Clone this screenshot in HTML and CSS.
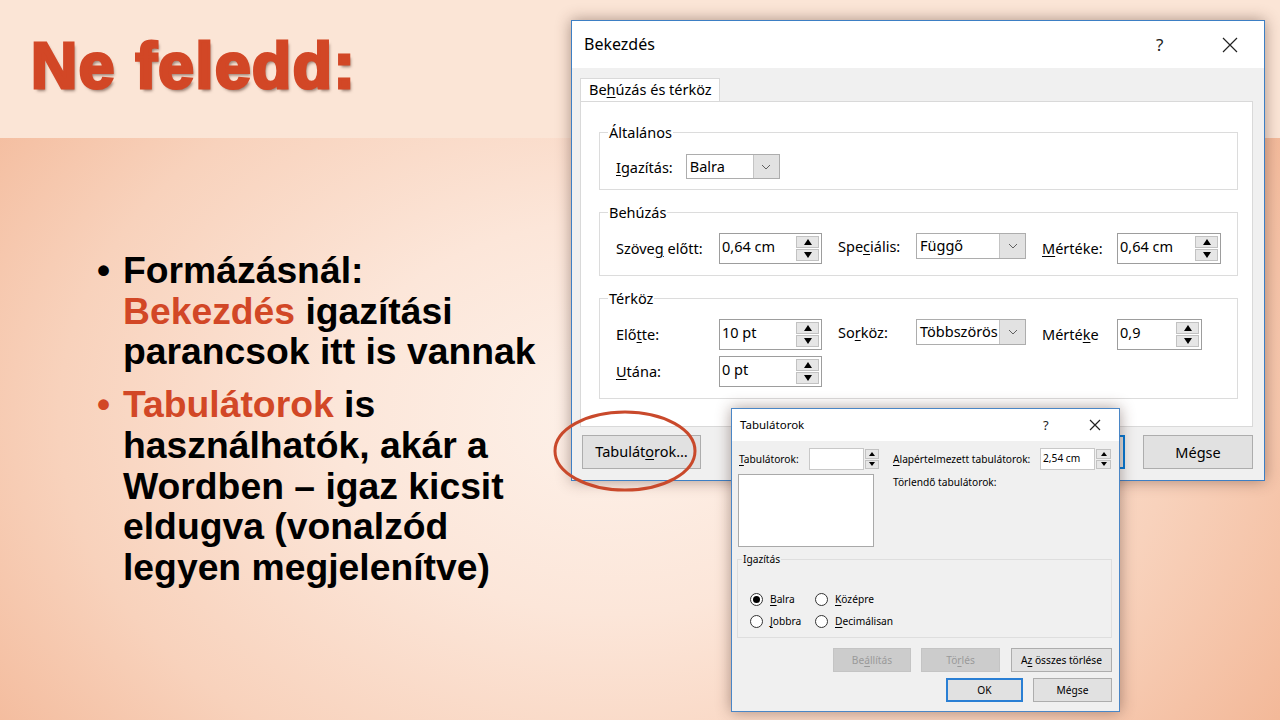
FILE: index.html
```html
<!DOCTYPE html>
<html lang="hu">
<head>
<meta charset="utf-8">
<title>Ne feledd</title>
<link rel="stylesheet" href="styles.css">
</head>
<body>
<div class="slide">
  <header class="title-band"><h1 class="title">Ne feledd:</h1></header>
  <main class="content">
    <ul class="bullets">
      <li><span class="dot">•</span><span class="txt">Formázásnál:<br><em class="hl">Bekezdés</em> igazítási<br>parancsok itt is vannak</span></li>
      <li><span class="dot hl">•</span><span class="txt"><em class="hl">Tabulátorok</em> is<br>használhatók, akár a<br>Wordben – igaz kicsit<br>eldugva (vonalzód<br>legyen megjelenítve)</span></li>
    </ul>
  </main>

  <div class="win win-para">
    <div class="titlebar">
      <span class="wtitle">Bekezdés</span>
      <span class="tb-help">?</span>
      <svg class="tb-close" width="16" height="16" viewBox="0 0 16 16"><path d="M1 1L15 15M15 1L1 15"/></svg>
    </div>
    <div class="wbody">
      <div class="tabs"><span class="tab">Be<u>h</u>úzás és térköz</span></div>
      <div class="panel">
        <fieldset class="grp g1">
          <legend>Általános</legend>
          <div class="row-simple">
            <span class="lbl"><u>I</u>gazítás:</span>
            <div class="combo c-balra"><span class="cv">Balra</span><span class="dd"><svg width="10" height="6" viewBox="0 0 10 6"><polyline points="1,1 5,5 9,1"/></svg></span></div>
          </div>
        </fieldset>
        <fieldset class="grp g2">
          <legend>Behúzás</legend>
          <div class="fgrid">
            <span class="lbl la">Szöve<u>g</u> előtt:</span>
            <div class="spin w103"><span class="sv">0,64 cm</span><span class="sb"><i class="up"></i><i class="dn"></i></span></div>
            <span class="lbl lb">Spe<u>c</u>iális:</span>
            <div class="combo w110"><span class="cv">Függő</span><span class="dd"><svg width="10" height="6" viewBox="0 0 10 6"><polyline points="1,1 5,5 9,1"/></svg></span></div>
            <span class="lbl la"><u>M</u>értéke:</span>
            <div class="spin w104"><span class="sv">0,64 cm</span><span class="sb"><i class="up"></i><i class="dn"></i></span></div>
          </div>
        </fieldset>
        <fieldset class="grp g3">
          <legend>Térköz</legend>
          <div class="fgrid">
            <span class="lbl la">Elő<u>t</u>te:</span>
            <div class="spin w103"><span class="sv">10 pt</span><span class="sb"><i class="up"></i><i class="dn"></i></span></div>
            <span class="lbl lb">So<u>r</u>köz:</span>
            <div class="combo w110"><span class="cv">Többszörös</span><span class="dd"><svg width="10" height="6" viewBox="0 0 10 6"><polyline points="1,1 5,5 9,1"/></svg></span></div>
            <span class="lbl la">Mérté<u>k</u>e</span>
            <div class="spin w85"><span class="sv">0,9</span><span class="sb"><i class="up"></i><i class="dn"></i></span></div>
            <span class="lbl la"><u>U</u>tána:</span>
            <div class="spin w103"><span class="sv">0 pt</span><span class="sb"><i class="up"></i><i class="dn"></i></span></div>
          </div>
        </fieldset>
      </div>
      <div class="btnrow">
        <button class="btn btn-tabs">Tabulát<u>o</u>rok…</button>
        <div class="btngrp">
          <button class="btn btn-ok" aria-label="OK"></button>
          <button class="btn btn-cancel">Mégse</button>
        </div>
      </div>
    </div>
  </div>

  <svg class="mark" width="160" height="96" viewBox="0 0 160 96"><ellipse cx="80" cy="48" rx="70" ry="39"/></svg>

  <div class="win win-tabs">
    <div class="titlebar sm">
      <span class="wtitle">Tabulátorok</span>
      <span class="tb-help">?</span>
      <svg class="tb-close" width="12" height="12" viewBox="0 0 12 12"><path d="M1 1L11 11M11 1L1 11"/></svg>
    </div>
    <div class="sbody">
      <div class="topgrid">
        <div class="colL">
          <div class="irow">
            <span class="slbl l-tab"><u>T</u>abulátorok:</span>
            <div class="sinput w55"></div>
            <span class="ssb"><i class="up"></i><i class="dn"></i></span>
          </div>
          <div class="listbox"></div>
        </div>
        <div class="colR">
          <div class="irow">
            <span class="slbl l-def"><u>A</u>lapértelmezett tabulátorok:</span>
            <div class="sinput w55">2,54 cm</div>
            <span class="ssb w17"><i class="up"></i><i class="dn"></i></span>
          </div>
          <div class="slbl l-del">Törlendő tabulátorok:</div>
        </div>
      </div>
      <fieldset class="sgrp">
        <legend>Igazítás</legend>
        <div class="radios">
          <span class="radio on"><i></i><span class="rl"><u>B</u>alra</span></span>
          <span class="radio"><i></i><span class="rl"><u>K</u>özépre</span></span>
          <span class="radio"><i></i><span class="rl"><u>J</u>obbra</span></span>
          <span class="radio"><i></i><span class="rl"><u>D</u>ecimálisan</span></span>
        </div>
      </fieldset>
      <div class="sbtnrow">
        <button class="sbtn dis w78">Be<u>á</u>llítás</button>
        <button class="sbtn dis w79">Tö<u>r</u>lés</button>
        <button class="sbtn w101">A<u>z</u> összes törlése</button>
      </div>
      <div class="sbtnrow r2">
        <button class="sbtn sok w77">OK</button>
        <button class="sbtn w79">Mégse</button>
      </div>
    </div>
  </div>
</div>
</body>
</html>
```

FILE: styles.css
```css
* { box-sizing: border-box; }
html, body { margin: 0; padding: 0; }
body { width: 1280px; height: 720px; overflow: hidden; font-family: "Liberation Sans", Arial, sans-serif; }

.slide {
  position: relative;
  width: 1280px;
  height: 720px;
  overflow: hidden;
  background: radial-gradient(ellipse 62% 78% at 48% 58%, #fdf1e9 0%, #fce6d9 35%, #f8d2bc 70%, #f3b898 100%);
}

.title-band {
  height: 138px;
  background: #fbe5d6;
  display: flex;
  align-items: center;
  padding: 0 0 6px 31px;
}
.title {
  margin: 0;
  font-family: "Liberation Sans", Arial, sans-serif;
  font-weight: 700;
  font-size: 64px;
  letter-spacing: 1.6px;
  color: #d24726;
  -webkit-text-stroke: 3.2px #d24726;
  text-shadow: 2px 3px 3px rgba(60, 30, 20, 0.5);
}

.content { padding: 112px 0 0 97px; }
.bullets { list-style: none; margin: 0; padding: 0; }
.bullets li {
  display: flex;
  font-weight: 700;
  font-size: 37.3px;
  line-height: 40.7px;
  color: #000;
  white-space: nowrap;
}
.bullets li + li { margin-top: 12px; }
.dot { width: 26px; flex: none; }
.hl { color: #d24726; font-style: normal; }

/* ---------- windows ---------- */
.win {
  position: absolute;
  font-family: "Noto Sans", "Open Sans", sans-serif;
  color: #000;
  background: #f0f0f0;
  border: 1px solid #3d7fc4;
  box-shadow: 0 0 14px rgba(70, 40, 30, 0.45);
  display: flex;
  flex-direction: column;
}
.win u { text-decoration: underline; text-underline-offset: 2px; text-decoration-thickness: 1px; }

.titlebar {
  background: #fff;
  height: 47px;
  flex: none;
  display: flex;
  align-items: center;
  padding-left: 12px;
}
.titlebar .wtitle { font-size: 16px; flex: 1; padding-bottom: 1px; }
.tb-help { font-size: 17px; color: #222; width: 66px; }
.tb-close { margin-right: 26px; }
.tb-close path { stroke: #222; stroke-width: 1.2; fill: none; }

.win-para { left: 571px; top: 20px; width: 694px; height: 461px; }
.wbody { flex: 1; padding: 10px 11px 0 8px; font-size: 14.5px; }

.tabs { display: flex; height: 23px; }
.tab {
  background: #fff;
  border: 1px solid #d9d9d9;
  border-bottom: none;
  padding: 0 7px 0 8px;
  line-height: 21px;
  position: relative;
  z-index: 1;
  margin-bottom: -1px;
  height: 23px;
}
.panel {
  background: #fff;
  border: 1px solid #d9d9d9;
  height: 326px;
  padding: 20px 14px 0 18px;
}

.grp {
  margin: 0;
  border: 1px solid #dcdcdc;
  padding: 0 15px 11px 16px;
  min-width: 0;
}
.grp legend { padding: 0 1px; margin-left: -8px; line-height: 20px; }
.g1 { padding-top: 12px; padding-bottom: 10px; }
.g2, .g3 { margin-top: 12px; padding-top: 11px; }

.row-simple { display: flex; align-items: center; gap: 13px; }
.lbl { white-space: nowrap; }

.fgrid {
  display: grid;
  grid-template-columns: 103px 119px 78px 126px 75px auto;
  row-gap: 6px;
  align-items: start;
}
.la { line-height: 31px; }
.lb { line-height: 26px; }

.combo {
  display: flex;
  border: 1px solid #adadad;
  background: #fff;
  height: 26px;
}
.c-balra { width: 94px; height: 25px; }
.w110 { width: 110px; }
.combo .cv { flex: 1; padding-left: 3px; line-height: 22px; white-space: nowrap; overflow: hidden; }
.combo .dd {
  width: 26px;
  flex: none;
  background: #e2e2e2;
  border-left: 1px solid #c4c4c4;
  display: flex;
  align-items: center;
  justify-content: center;
}
.dd polyline { stroke: #606060; stroke-width: 1; fill: none; }

.spin {
  display: flex;
  border: 1px solid #9d9d9d;
  background: #fff;
  height: 31px;
}
.w103 { width: 103px; }
.w104 { width: 104px; }
.w85 { width: 85px; }
.spin .sv { flex: 1; padding-left: 2px; line-height: 25px; white-space: nowrap; }
.sb {
  width: 25px;
  flex: none;
  display: flex;
  flex-direction: column;
  gap: 1px;
  padding: 2px 2px 2px 0;
}
.sb i, .ssb i {
  flex: 1;
  background: #e6e6e6;
  border: 1px solid #c2c2c2;
  display: flex;
  align-items: center;
  justify-content: center;
}
.sb i.up::before, .ssb i.up::before {
  content: "";
  border-left: 4px solid transparent;
  border-right: 4px solid transparent;
  border-bottom: 6px solid #000;
}
.sb i.dn::before, .ssb i.dn::before {
  content: "";
  border-left: 4px solid transparent;
  border-right: 4px solid transparent;
  border-top: 6px solid #000;
}

.btnrow {
  display: flex;
  justify-content: space-between;
  margin-top: 8px;
  padding-left: 2px;
}
.btngrp { display: flex; gap: 18px; }
.btn {
  font: inherit;
  color: #000;
  height: 34px;
  background: #e1e1e1;
  border: 1px solid #adadad;
  padding: 0;
}
.btn-tabs { width: 119px; padding-bottom: 2px; }
.btn-ok { width: 110px; border: 2px solid #0078d7; }
.btn-cancel { width: 110px; }

/* red mark */
.mark { position: absolute; left: 545px; top: 403px; overflow: visible; }
.mark ellipse { fill: none; stroke: #c9492b; stroke-width: 3; }

/* ---------- Tabulátorok dialog ---------- */
.win-tabs { left: 731px; top: 408px; width: 389px; height: 304px; border-color: #4a86c6; }
.titlebar.sm { height: 32px; padding-left: 8px; }
.titlebar.sm .wtitle { font-size: 11.5px; }
.titlebar.sm .tb-help { font-size: 13px; width: 46px; }
.titlebar.sm .tb-close { margin-right: 18px; }

.sbody { flex: 1; padding: 7px 7px 0 6px; font-size: 10.2px; }
.topgrid { display: grid; grid-template-columns: 142px 219px; column-gap: 13px; }
.irow { display: flex; align-items: center; height: 22px; }
.slbl { white-space: nowrap; }
.l-tab { width: 71px; padding-left: 1px; }
.l-def { width: 147px; }
.l-del { margin-top: 4px; line-height: 16px; }
.sinput {
  height: 22px;
  background: #fff;
  border: 1px solid #c8c8c8;
  padding-left: 2px;
  line-height: 18px;
}
.w55 { width: 55px; }
.ssb {
  width: 16px;
  height: 22px;
  display: flex;
  flex-direction: column;
  gap: 1px;
  padding: 1px;
}
.ssb.w17 { width: 17px; }
.ssb i.up::before { border-left-width: 3px; border-right-width: 3px; border-bottom-width: 4px; }
.ssb i.dn::before { border-left-width: 3px; border-right-width: 3px; border-top-width: 4px; }
.listbox {
  margin-top: 4px;
  width: 136px;
  height: 73px;
  background: #fff;
  border: 1px solid #a9a9a9;
}

.sgrp {
  margin: 4px 0 0 -1px;
  border: 1px solid #dedede;
  padding: 24px 8px 8px 12px;
  min-width: 0;
}
.sgrp legend { padding: 0 1px; margin-left: -8px; line-height: 16px; }
.radios {
  display: grid;
  grid-template-columns: 65px auto;
  row-gap: 6px;
}
.radio { display: flex; align-items: center; height: 16px; gap: 7px; white-space: nowrap; }
.radio i {
  width: 13px;
  height: 13px;
  border-radius: 50%;
  border: 1px solid #333;
  background: #fff;
  display: flex;
  align-items: center;
  justify-content: center;
  flex: none;
}
.radio.on i::before {
  content: "";
  width: 7px;
  height: 7px;
  border-radius: 50%;
  background: #000;
}

.sbtnrow { display: flex; justify-content: flex-end; gap: 10px; margin-top: 10px; }
.sbtnrow.r2 { margin-top: 6px; }
.sbtn {
  font: inherit;
  color: #000;
  height: 24px;
  background: #e1e1e1;
  border: 1px solid #adadad;
  padding: 0;
}
.sbtn.dis { background: #cccccc; border-color: #c4c4c4; color: #9a9a9a; }
.sbtn.sok { border: 2px solid #2a7fd4; }
.w77 { width: 77px; }
.w78 { width: 78px; }
.w79 { width: 79px; }
.w101 { width: 101px; margin-left: 1px; }
```
